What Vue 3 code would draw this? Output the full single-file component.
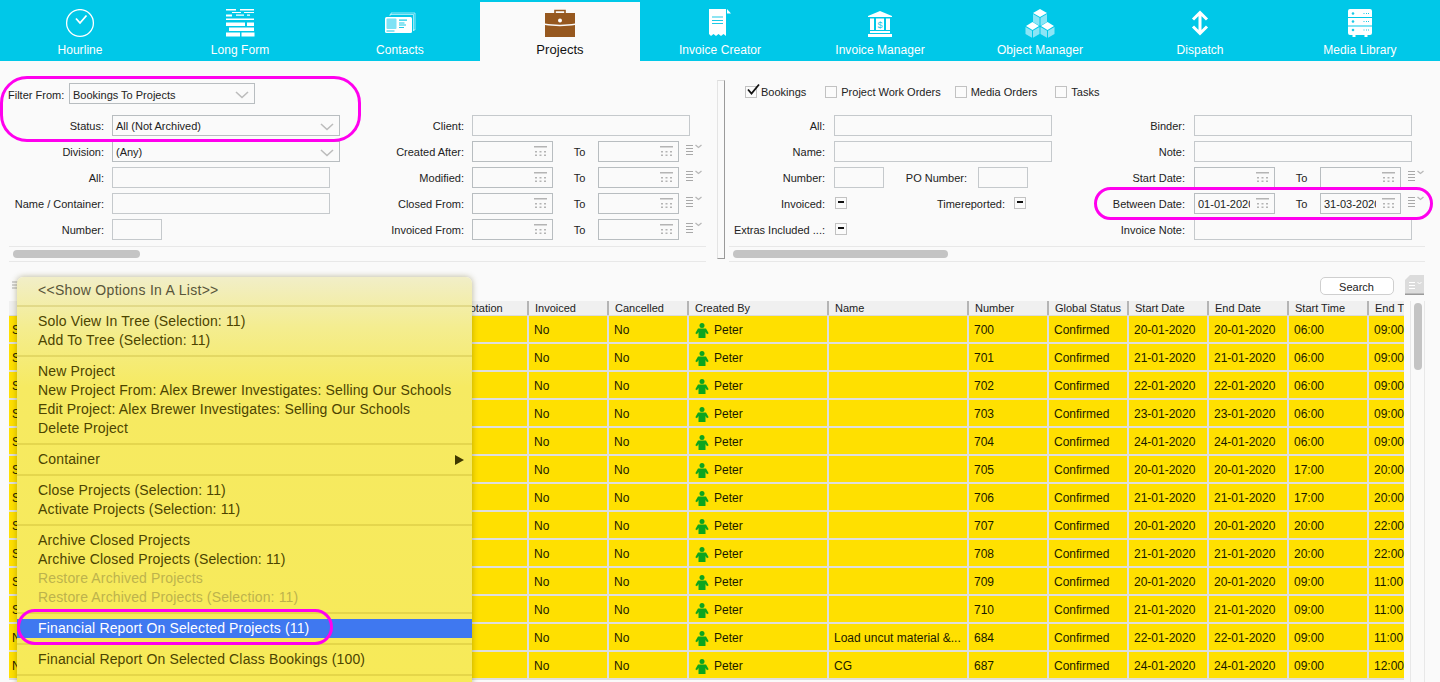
<script setup>
const tabs = [
  { key: 'clock', label: 'Hourline' },
  { key: 'form', label: 'Long Form' },
  { key: 'contacts', label: 'Contacts' },
  { key: 'case', label: 'Projects', active: true },
  { key: 'invoice', label: 'Invoice Creator' },
  { key: 'bank', label: 'Invoice Manager' },
  { key: 'cubes', label: 'Object Manager' },
  { key: 'dispatch', label: 'Dispatch' },
  { key: 'server', label: 'Media Library' },
]
const colB = ['Created After:', 'Modified:', 'Closed From:', 'Invoiced From:']
const checks = [
  { label: 'Bookings', on: true },
  { label: 'Project Work Orders' },
  { label: 'Media Orders' },
  { label: 'Tasks' },
]
const cols = [
  { t: '', w: 440 }, { t: 'Quotation', w: 80 }, { t: 'Invoiced', w: 80 }, { t: 'Cancelled', w: 80 },
  { t: 'Created By', w: 140 }, { t: 'Name', w: 140 }, { t: 'Number', w: 80 }, { t: 'Global Status', w: 80 },
  { t: 'Start Date', w: 80 }, { t: 'End Date', w: 80 }, { t: 'Start Time', w: 80 }, { t: 'End Time', w: 80 },
]
const raw = [
  ['700', '20', '06:00', '09:00'], ['701', '21', '06:00', '09:00'], ['702', '22', '06:00', '09:00'],
  ['703', '23', '06:00', '09:00'], ['704', '24', '06:00', '09:00'], ['705', '20', '17:00', '20:00'],
  ['706', '21', '17:00', '20:00'], ['707', '20', '20:00', '22:00'], ['708', '21', '20:00', '22:00'],
  ['709', '20', '09:00', '11:00'], ['710', '21', '09:00', '11:00'],
  ['684', '22', '09:00', '11:00', 'Load uncut material &...', 'N'], ['687', '24', '09:00', '12:00', 'CG', 'N'],
]
const rows = raw.map(r => ({
  first: r[5] || 'S', num: r[0], date: r[1] + '-01-2020', start: r[2], end: r[3], name: r[4] || '',
}))
const menu = [
  [{ t: '<<Show Options In A List>>', top: true }],
  [{ t: 'Solo View In Tree (Selection: 11)' }, { t: 'Add To Tree (Selection: 11)' }],
  [{ t: 'New Project' }, { t: 'New Project From: Alex Brewer Investigates: Selling Our Schools' },
   { t: 'Edit Project: Alex Brewer Investigates: Selling Our Schools' }, { t: 'Delete Project' }],
  [{ t: 'Container', sub: true }],
  [{ t: 'Close Projects (Selection: 11)' }, { t: 'Activate Projects (Selection: 11)' }],
  [{ t: 'Archive Closed Projects' }, { t: 'Archive Closed Projects (Selection: 11)' },
   { t: 'Restore Archived Projects', off: true }, { t: 'Restore Archived Projects (Selection: 11)', off: true }],
  [{ t: 'Financial Report On Selected Projects (11)', hi: true }],
  [{ t: 'Financial Report On Selected Class Bookings (100)' }],
  [{ t: '' }],
]
</script>

<template>
  <div class="page">
    <nav class="nav">
      <div v-for="tab in tabs" :key="tab.key" class="tab" :class="{ active: tab.active }">
        <svg class="tabicon" width="32" height="30" viewBox="0 0 32 30">
          <g v-if="tab.key === 'clock'" fill="none" stroke="#fff">
            <circle cx="16" cy="14" r="13.400" stroke-width="1.300" />
            <path d="M12 9.500l4 4.500 6.500-7.500" stroke-width="1.800" />
          </g>
          <g v-else-if="tab.key === 'form'" fill="#fff">
            <path d="M2 0h10v1.500H2zM16 0h14v1.500H16zM8 3h9v1H8zM20 3h10v1H20zM2 5.500h6v2H2zM12 5.500h8v1.200h-8zM23 5.500h3v1.200h-3zM2 9.500h28v1.500H2z" />
            <path d="M2 14h19v3.500H2zM23 14h7v3.500h-7zM5 19h25v3.500H5zM2 24h14v4H2zM17.500 24H30.500v4H17.500z" transform="translate(0 -.5)" />
          </g>
          <g v-else-if="tab.key === 'contacts'">
            <path d="M7 5.500V4h24v17h-2M6 7V5.500h23.500V22" fill="none" stroke="#fff" stroke-width=".6" />
            <rect x="1" y="8" width="27" height="16" rx="1.500" fill="#fff" />
            <rect x="2.500" y="9.500" width="10" height="10.500" rx="1" fill="#7fe2f5" />
            <path d="M15 10.500h8v1.200h-8zM15 13.500h5.500v1h-5.500zM15 15.500h7v1h-7zM15 18h5v1h-5zM2.500 21.500h8v1h-8z" fill="#1cc9e6" />
          </g>
          <g v-else-if="tab.key === 'case'">
            <path d="M11 4V1.500h10V4" fill="none" stroke="#96581f" stroke-width="1.600" />
            <path d="M1 4h30v10.500c-8 1.500-22 1.500-30 0z" fill="#96581f" />
            <path d="M1 16c8 1.500 22 1.500 30 0v12H1z" fill="#96581f" />
            <circle cx="16" cy="11.500" r="2" fill="#fff" />
          </g>
          <g v-else-if="tab.key === 'invoice'">
            <path d="M5 0h17v27l-2.500-2-2.500 2-2.500-2-2.500 2-2.500-2-2.500 2-2-2z" fill="#fff" />
            <path d="M23 0l4 4.500h-4z" fill="#fff" />
            <path d="M8 7.500h11v1H8zM8 11h11v1H8zM8 14h11v1H8z" fill="#1cc9e6" />
          </g>
          <g v-else-if="tab.key === 'bank'" fill="#fff">
            <path d="M16 2l12 5v1H4V7z" />
            <path d="M6 9.500h4V21H6zM22 9.500h4V21h-4zM12 9.500h8V21h-8z" />
            <path d="M6 22h20v2H6zM4 25h24v3H4z" />
            <text x="16" y="18.500" text-anchor="middle" font-size="9" font-family="Liberation Sans" fill="#1cc9e6">$</text>
          </g>
          <g v-else-if="tab.key === 'cubes'">
            <path d="M16 0l7 4-7 4-7-4z" fill="#fff" />
            <path d="M9 5l6.500 3.700v8L9 13zM23 5l-6.500 3.700v8L23 13z" fill="#8ce5f6" />
            <path d="M8.500 13l6.500 4-6.500 4L2 17z" fill="#fff" />
            <path d="M1.500 18l6.500 3.700v7L1.500 25zM15.500 18L9 21.700v7l6.500-3.700z" fill="#8ce5f6" />
            <path d="M23.500 13l6.500 4-6.500 4L17 17z" fill="#fff" />
            <path d="M16.500 18l6.500 3.700v7L16.500 25zM30.500 18L24 21.700v7l6.500-3.700z" fill="#8ce5f6" />
          </g>
          <g v-else-if="tab.key === 'dispatch'" fill="none" stroke="#fff" stroke-width="3">
            <path d="M9 10.500l7-7 7 7M16 4v20M9 17.500l7 7 7-7" />
          </g>
          <g v-else fill="#fff">
            <path d="M4 2a2 2 0 012-2h20a2 2 0 012 2v6H4zM4 9h24v7.500H4zM4 17.500h24V24a2 2 0 01-2 2h-2.500v2h-3v-2h-9v2h-3v-2H6a2 2 0 01-2-2z" />
            <g fill="#1cc9e6">
              <circle cx="9" cy="4.500" r="1.300" /><circle cx="9" cy="12.500" r="1.300" /><circle cx="9" cy="21" r="1.300" />
              <path d="M19.500 4h1v1h-1zM22 4h1v1h-1zM24 4h1v1h-1zM19.500 12h1v1h-1zM22 12h1v1h-1zM24 12h1v1h-1zM19.500 20.500h1v1h-1zM22 20.500h1v1h-1zM24 20.500h1v1h-1z" />
            </g>
          </g>
        </svg>
        <span class="tablabel">{{ tab.label }}</span>
      </div>
    </nav>

    <section class="filters">
      <div class="panel left">
        <div class="top-row">
          <span class="from-label">Filter From:</span>
          <div class="select from-select"><span class="from-text">Bookings To Projects</span><svg class="chev" width="14" height="8" viewBox="0 0 14 8"><path d="M1 1l6 5.500L13 1" /></svg></div>
        </div>
        <div class="cols">
          <div class="col col-a">
            <div class="row"><label class="lab">Status:</label><div class="select w228">All (Not Archived)<svg class="chev" width="14" height="8" viewBox="0 0 14 8"><path d="M1 1l6 5.500L13 1" /></svg></div></div>
            <div class="row"><label class="lab">Division:</label><div class="select w228">(Any)<svg class="chev" width="14" height="8" viewBox="0 0 14 8"><path d="M1 1l6 5.500L13 1" /></svg></div></div>
            <div class="row"><label class="lab">All:</label><div class="input w218"></div></div>
            <div class="row"><label class="lab">Name / Container:</label><div class="input w218"></div></div>
            <div class="row"><label class="lab">Number:</label><div class="input w50"></div></div>
          </div>
          <div class="col col-b">
            <div class="row"><label class="lab">Client:</label><div class="input w218"></div></div>
            <div v-for="l in colB" :key="l" class="row">
              <label class="lab">{{ l }}</label>
              <template v-for="n in 2" :key="n">
                <div class="date">
                  <svg class="cal" width="13" height="11" viewBox="0 0 13 11"><path d="M0 0h13v1.500H0zM1 5h2v1.500H1zM5.500 5h2v1.500h-2zM10 5h2v1.500h-2zM1 8.500h2V10H1zM5.500 8.500h2V10h-2zM10 8.500h2V10h-2z" /></svg>
                </div>
                <span v-if="n === 1" class="to">To</span>
              </template>
              <svg class="listmenu" width="17" height="11" viewBox="0 0 17 11"><path class="ll" d="M0 1.500h7M0 4.500h7M0 7.500h7M0 10.500h7" /><path class="lc" d="M9.500 1l3 2.500 3-2.500" /></svg>
            </div>
          </div>
        </div>
        <div class="hscroll hs-left"><div class="thumb tl"></div></div>
      </div>

      <div class="divider"></div>

      <div class="panel right">
        <div class="checks">
          <div v-for="c in checks" :key="c.label" class="check">
            <span class="cbox">
              <svg v-if="c.on" class="tick" width="15" height="13" viewBox="0 0 15 13"><path d="M2 6.500l3.500 4L13 1.500" /></svg>
            </span>
            <span>{{ c.label }}</span>
          </div>
        </div>
        <div class="cols">
          <div class="col col-c">
            <div class="row"><label class="lab">All:</label><div class="input w218"></div></div>
            <div class="row"><label class="lab">Name:</label><div class="input w218"></div></div>
            <div class="row"><label class="lab">Number:</label><div class="input w50"></div><label class="lab po">PO Number:</label><div class="input w50"></div></div>
            <div class="row"><label class="lab">Invoiced:</label><span class="mbox"></span><label class="lab timerep">Timereported:</label><span class="mbox"></span></div>
            <div class="row"><label class="lab">Extras Included ...:</label><span class="mbox"></span></div>
          </div>
          <div class="col col-d">
            <div class="row"><label class="lab">Binder:</label><div class="input w218"></div></div>
            <div class="row"><label class="lab">Note:</label><div class="input w218"></div></div>
            <div v-for="r in [['Start Date:', '', ''], ['Between Date:', '01-01-2020', '31-03-2020']]" :key="r[0]" class="row">
              <label class="lab">{{ r[0] }}</label>
              <template v-for="n in 2" :key="n">
                <div class="date">
                  <span class="dateval">{{ r[n] }}</span>
                  <svg class="cal" width="13" height="11" viewBox="0 0 13 11"><path d="M0 0h13v1.500H0zM1 5h2v1.500H1zM5.500 5h2v1.500h-2zM10 5h2v1.500h-2zM1 8.500h2V10H1zM5.500 8.500h2V10h-2zM10 8.500h2V10h-2z" /></svg>
                </div>
                <span v-if="n === 1" class="to">To</span>
              </template>
              <svg class="listmenu" width="17" height="11" viewBox="0 0 17 11"><path class="ll" d="M0 1.500h7M0 4.500h7M0 7.500h7M0 10.500h7" /><path class="lc" d="M9.500 1l3 2.500 3-2.500" /></svg>
            </div>
            <div class="row"><label class="lab">Invoice Note:</label><div class="input w218"></div></div>
          </div>
        </div>
        <div class="hscroll hs-right"><div class="thumb tr2"></div></div>
      </div>
    </section>

    <div class="toolbar">
      <svg class="tool-menu" width="9" height="10" viewBox="0 0 9 10"><path d="M0 1h9M0 4h9M0 7h9" /></svg>
      <button class="search">Search</button>
      <svg class="doc" width="19" height="22" viewBox="0 0 19 22">
        <path d="M5 0h14v19H0V5z" fill="#dcdcdc" />
        <path d="M0 18.500h19V20H0z" fill="#9a9a9a" />
        <path d="M4 7.500h6M4 10.500h6M4 13.500h6M12.500 7l2 2 2-2" stroke="#fff" fill="none" />
      </svg>
    </div>

    <div class="tablewrap">
      <div class="table">
        <div class="thead">
          <div v-for="c in cols" :key="c.t" class="th" :style="{ width: c.w + 'px' }">{{ c.t }}</div>
        </div>
        <div v-for="r in rows" :key="r.num" class="trow">
          <div class="td" style="width: 440px">{{ r.first }}</div>
          <div class="td" style="width: 80px"></div>
          <div class="td" style="width: 80px">No</div>
          <div class="td" style="width: 80px">No</div>
          <div class="td person" style="width: 140px">
            <svg width="14" height="15" viewBox="0 0 14 15"><circle cx="7" cy="2.600" r="2.500" fill="#0ca51f" /><path d="M3 5.500h8l2.700 4.800-1.700.9L10.500 9v6h-7V9L2 11.200.3 10.300z" fill="#0ca51f" /></svg>
            <span>Peter</span>
          </div>
          <div class="td" style="width: 140px">{{ r.name }}</div>
          <div class="td" style="width: 80px">{{ r.num }}</div>
          <div class="td" style="width: 80px">Confirmed</div>
          <div class="td" style="width: 80px">{{ r.date }}</div>
          <div class="td" style="width: 80px">{{ r.date }}</div>
          <div class="td" style="width: 80px">{{ r.start }}</div>
          <div class="td" style="width: 80px">{{ r.end }}</div>
        </div>
      </div>
      <div class="vscroll"><div class="vthumb"></div></div>
    </div>

    <div class="ctx">
      <template v-for="(group, i) in menu" :key="i">
        <div v-if="i" class="sep"></div>
        <div v-for="item in group" :key="item.t" class="item" :class="{ off: item.off, hi: item.hi, top: item.top }">
          <span>{{ item.t }}</span>
          <svg v-if="item.sub" class="sub" width="9" height="10" viewBox="0 0 9 10"><path d="M0 0l9 5-9 5z" /></svg>
        </div>
      </template>
    </div>

    <div class="ring ring1"></div>
    <div class="ring ring2"></div>
    <div class="ring ring3"></div>
  </div>
</template>

<style>
html, body { margin: 0; background: #fafafa; }
</style>

<style scoped>
.page {
  position: relative;
  width: 1440px;
  height: 682px;
  overflow: hidden;
  background: #fafafa;
  font-family: "Liberation Sans", Arial, sans-serif;
  font-size: 11px;
  color: #222;
}
.nav { display: flex; height: 61px; background: #00c8e8; }
.tab {
  width: 160px;
  display: flex;
  flex-direction: column;
  align-items: center;
  color: #fff;
  padding-top: 9px;
  box-sizing: border-box;
}
.tab.active { background: #fafafa; color: #111; margin-top: 2px; padding-top: 7px; }
.tabicon { display: block; height: 30px; }
.tablabel { font-size: 12px; line-height: 14px; margin-top: 4px; letter-spacing: .05px; }
.tab.active .tablabel { font-size: 13px; }

.filters { display: flex; height: 200px; }
.panel { position: relative; }
.left { width: 717px; padding-top: 22px; box-sizing: border-box; }
.right { width: 715px; padding-top: 24px; box-sizing: border-box; }
.divider {
  width: 6px;
  height: 177px;
  margin-top: 19px;
  border: 1px solid #dcdcdc;
  border-right-color: #9a9a9a;
  border-bottom-color: #9a9a9a;
  border-left-color: #e4e4e4;
}
.top-row { display: flex; align-items: center; height: 21px; padding-left: 8px; }
.from-label { width: 61px; padding-top: 2px; }
.from-text { padding-top: 2px; }
.cols { display: flex; margin-top: 11px; }
.right .cols { margin-top: 16px; }
.col { display: flex; flex-direction: column; gap: 5px; }
.col-a { width: 340px; }
.col-b { width: 377px; }
.col-c { width: 335px; }
.col-d { width: 372px; }
.row { display: flex; align-items: center; height: 21px; }
.lab { text-align: right; flex: none; white-space: nowrap; }
.col-a .lab { width: 104px; margin-right: 8px; }
.col-b .lab { width: 124px; margin-right: 8px; }
.col-c .lab { width: 100px; margin-right: 9px; }
.col-d .lab { width: 125px; margin-right: 9px; }
.col-c .lab.po { width: 83px; margin-right: 11px; }
.col-c .lab.timerep { width: 158px; margin-right: 8px; }
.input, .select, .date {
  box-sizing: border-box;
  height: 21px;
  border: 1px solid #c5c9cc;
  background: #fafafa;
  flex: none;
}
.w218 { width: 218px; }
.w228 { width: 228px; }
.w50 { width: 50px; }
.select {
  position: relative;
  display: flex;
  align-items: center;
  padding-left: 3px;
  border-color: #b8bdc0;
  color: #222;
}
.from-select { width: 186px; }
.chev { position: absolute; right: 5px; top: 7px; fill: none; stroke: #bcbcbc; stroke-width: 1.6; }
.date {
  position: relative;
  width: 81px;
  display: flex;
  align-items: center;
  padding-left: 3px;
  border-color: #b8bdc0;
  overflow: hidden;
}
.dateval { display: block; width: 52px; overflow: hidden; white-space: nowrap; }
.cal { position: absolute; right: 5px; top: 4px; fill: #b4b4b4; }
.to { width: 37px; padding-left: 8px; text-align: center; flex: none; }
.listmenu { margin-left: 7px; margin-top: -5px; flex: none; }
.ll { stroke: #a8a8a8; fill: none; }
.lc { stroke: #b8b8b8; fill: none; stroke-width: 1.300; }
.hscroll {
  position: absolute;
  top: 185px;
  height: 14px;
  border-top: 1px solid #e8e8e8;
  border-bottom: 1px solid #e8e8e8;
  box-sizing: content-box;
}
.hs-left { left: 9px; width: 697px; }
.hs-right { left: 4px; width: 696px; }
.thumb { position: absolute; top: 3px; height: 8px; border-radius: 4px; background: #c4c4c4; }
.tl { left: 4px; width: 127px; }
.tr2 { left: 4px; width: 215px; }
.checks { display: flex; align-items: center; height: 14px; padding-left: 20px; }
.check { display: flex; align-items: center; gap: 4px; margin-right: 18px; }
.check:nth-child(1) { margin-right: 19px; }
.check:nth-child(2) { margin-right: 14px; }
.cbox {
  position: relative;
  display: block;
  box-sizing: border-box;
  width: 12px;
  height: 12px;
  border: 1px solid #c2c2c2;
  background: #fbfbfb;
}
.tick { position: absolute; left: 0; top: -4px; fill: none; stroke: #111; stroke-width: 1.800; }
.mbox {
  position: relative;
  display: block;
  box-sizing: border-box;
  flex: none;
  width: 12px;
  height: 12px;
  margin-left: 1px;
  margin-top: -2px;
  border: 1px solid #c2c2c2;
  background: #fbfbfb;
}
.mbox::after { content: ""; position: absolute; left: 2px; right: 2px; top: 3px; height: 2px; background: #111; }

.toolbar { position: relative; display: flex; align-items: center; height: 18px; margin-top: 16px; padding-left: 12px; }
.tool-menu { stroke: #aaa; fill: none; }
.search {
  margin-left: auto;
  margin-right: 11px;
  box-sizing: border-box;
  width: 74px;
  height: 18px;
  padding: 1px 1px 0 0;
  border: 1px solid #cfcfcf;
  border-radius: 5px;
  background: #fff;
  font: 11px "Liberation Sans", Arial, sans-serif;
  color: #222;
}
.doc { margin-right: 16px; }
.tablewrap { display: flex; margin-top: 6px; padding-left: 9px; }
.table { width: 1395px; flex: none; overflow: hidden; }
.thead { display: flex; height: 15px; background: #f0f0f0; border-bottom: 1px solid #dcdcdc; box-sizing: border-box; }
.th {
  flex: none;
  box-sizing: border-box;
  padding-left: 6px;
  line-height: 15px;
  border-right: 2px solid #b5b5b5;
  white-space: nowrap;
  overflow: hidden;
}
.trow { display: flex; height: 28px; box-sizing: border-box; border-bottom: 2px solid #dedede; background: #ffe000; }
.td {
  flex: none;
  box-sizing: border-box;
  display: flex;
  align-items: center;
  padding-left: 5px;
  padding-top: 2px;
  font-size: 12px;
  color: #1a1a00;
  border-right: 2px solid #dedede;
  white-space: nowrap;
  overflow: hidden;
}
.td:first-child { padding-left: 3px; }
.person svg { margin-left: 1px; margin-right: 5px; flex: none; }
.vscroll {
  position: relative;
  margin-left: 6px;
  width: 13px;
  height: 381px;
  border-left: 1px solid #e8e8e8;
  border-right: 1px solid #e8e8e8;
}
.vthumb { position: absolute; left: 3px; top: 2px; width: 8px; height: 67px; border-radius: 4px; background: #c4c4c4; }

.ctx {
  position: absolute;
  left: 17px;
  top: 277px;
  width: 455px;
  height: 420px;
  padding-top: 4px;
  box-sizing: border-box;
  border-radius: 6px 6px 0 0;
  background: linear-gradient(#f1eec8 0, #f4ed90 50px, #f6ea62 110px, #f7ea58 100%);
  box-shadow: 0 0 6px rgba(90, 80, 0, .4);
  font-family: "Liberation Sans", Arial, sans-serif;
  font-size: 14px;
  color: #4c4400;
}
.item { position: relative; height: 19px; line-height: 19px; padding-left: 21px; white-space: nowrap; letter-spacing: .15px; }
.item.top { color: #58553a; letter-spacing: .3px; }
.item.off { color: #bdb34c; }
.item.hi { background: #3f78f0; color: #fff; }
.sub { position: absolute; right: 8px; top: 5px; fill: #3f3800; }
.sep { height: 12px; position: relative; }
.sep::after { content: ""; position: absolute; left: 0; right: 0; top: 5px; height: 2px; background: rgba(150, 130, 0, .18); }

.ring { position: absolute; box-sizing: border-box; border: 3px solid #ff00ee; }
.ring1 { left: 0; top: 76px; width: 361px; height: 66px; border-radius: 27px; }
.ring2 { left: 1094px; top: 187px; width: 339px; height: 33px; border-radius: 17px; }
.ring3 { left: 17px; top: 609px; width: 316px; height: 36px; border-radius: 18px; }
</style>
